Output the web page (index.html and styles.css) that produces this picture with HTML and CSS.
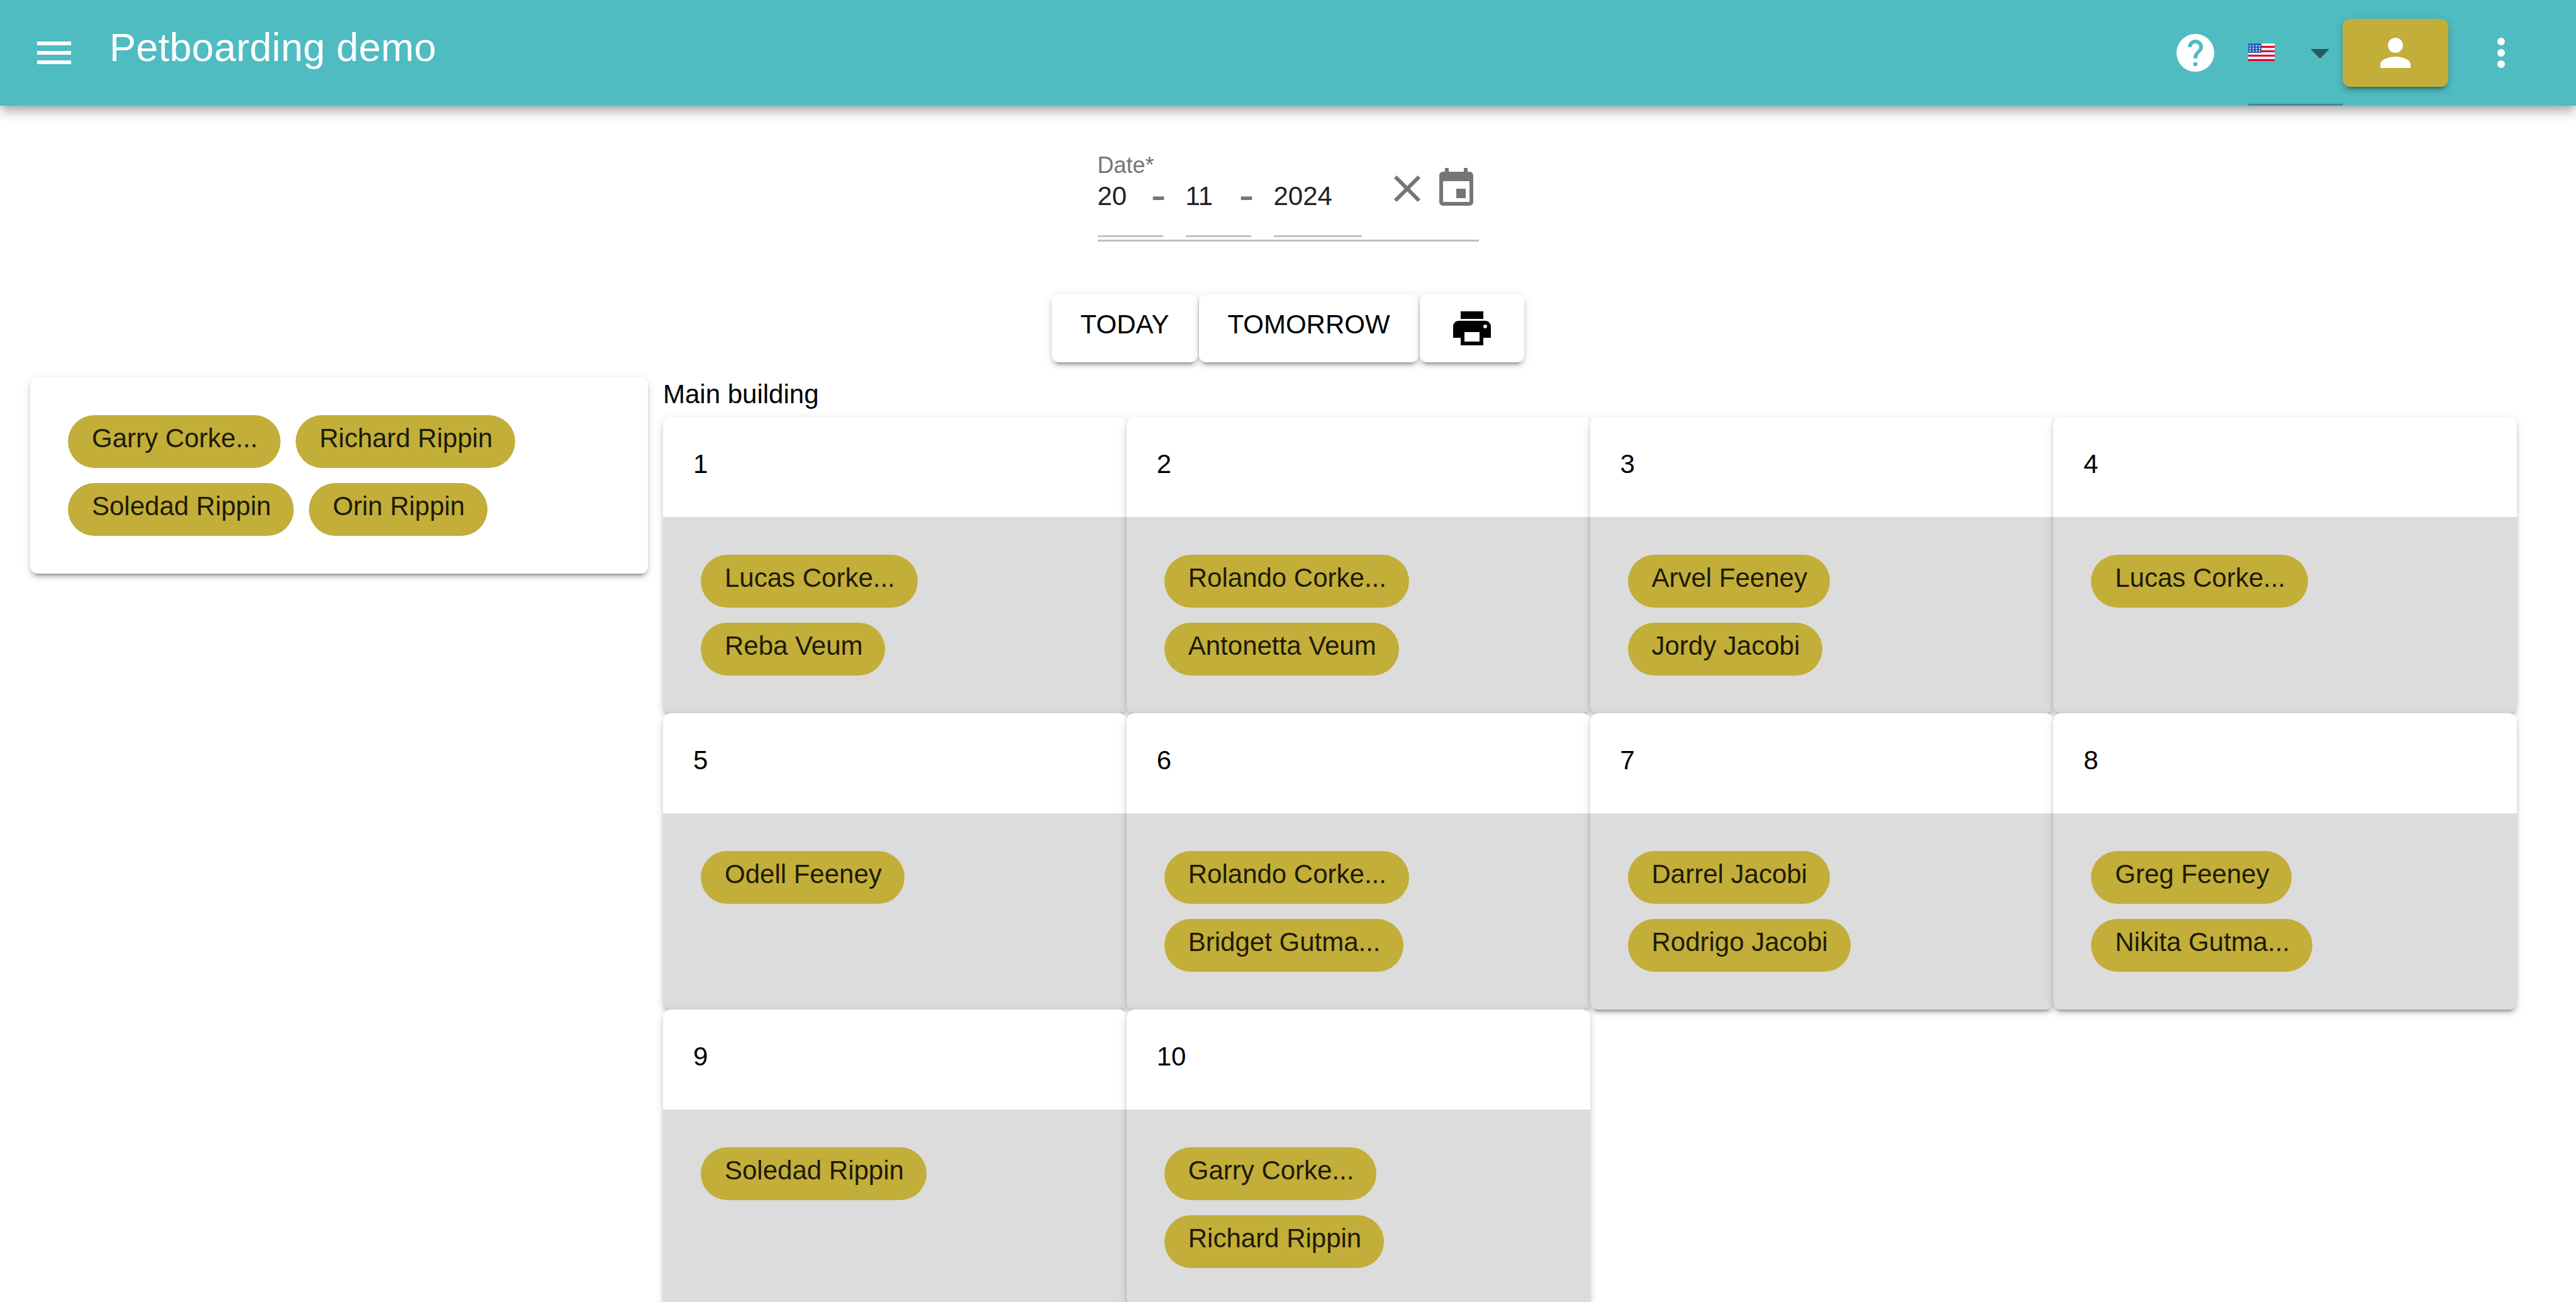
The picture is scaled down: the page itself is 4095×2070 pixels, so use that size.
FILE: index.html
```html
<!DOCTYPE html>
<html lang="en">
<head>
<meta charset="utf-8">
<title>Petboarding demo</title>
<link rel="stylesheet" href="styles.css">
</head>
<body>
<header class="appbar">
  <svg class="icon" viewBox="0 0 24 24"><path d="M3 18h18v-2H3v2zm0-5h18v-2H3v2zm0-7v2h18V6H3z"/></svg>
  <h1 class="title">Petboarding demo</h1>
  <div class="spacer"></div>
  <svg class="icon" viewBox="0 0 24 24"><path d="M12 2C6.48 2 2 6.48 2 12s4.48 10 10 10 10-4.48 10-10S17.52 2 12 2zm1 17h-2v-2h2v2zm2.07-7.75l-.9.92C13.45 12.9 13 13.5 13 15h-2v-.5c0-1.1.45-2.1 1.17-2.83l1.24-1.26c.37-.36.59-.86.59-1.41 0-1.1-.9-2-2-2s-2 .9-2 2H8c0-2.21 1.79-4 4-4s4 1.79 4 4c0 .88-.36 1.68-.93 2.25z"/></svg>
  <div class="lang">
    <svg class="flag" viewBox="0 0 42 28">
      <rect width="42" height="28" fill="#eef0f2"/>
      <g fill="#e4002b">
        <rect y="4" width="42" height="3"/><rect y="11" width="42" height="3"/><rect y="18" width="42" height="3"/><rect y="25" width="42" height="3"/>
      </g>
      <rect width="21" height="15" fill="#2f5fbd"/>
      <g fill="#dfe6f5">
        <rect x="2" y="3" width="2" height="2"/><rect x="7" y="3" width="2" height="2"/><rect x="12" y="3" width="2" height="2"/><rect x="17" y="3" width="2" height="2"/>
        <rect x="2" y="7" width="2" height="2"/><rect x="7" y="7" width="2" height="2"/><rect x="12" y="7" width="2" height="2"/><rect x="17" y="7" width="2" height="2"/>
        <rect x="2" y="11" width="2" height="2"/><rect x="7" y="11" width="2" height="2"/><rect x="12" y="11" width="2" height="2"/><rect x="17" y="11" width="2" height="2"/>
      </g>
    </svg>
    <svg class="caret" viewBox="0 0 30 15"><path d="M0 0h30L15 15z"/></svg>
  </div>
  <button class="user-btn" type="button">
    <svg class="icon" viewBox="0 0 24 24"><path d="M12 12c2.21 0 4-1.79 4-4s-1.79-4-4-4-4 1.79-4 4 1.79 4 4 4zm0 2c-2.67 0-8 1.34-8 4v2h16v-2c0-2.66-5.33-4-8-4z"/></svg>
  </button>
  <svg class="icon more" viewBox="0 0 24 24"><path d="M12 8c1.1 0 2-.9 2-2s-.9-2-2-2-2 .9-2 2 .9 2 2 2zm0 2c-1.1 0-2 .9-2 2s.9 2 2 2 2-.9 2-2-.9-2-2-2zm0 6c-1.1 0-2 .9-2 2s.9 2 2 2 2-.9 2-2-.9-2-2-2z"/></svg>
</header>

<section class="date-field">
  <div class="date-main">
    <div class="date-label">Date*</div>
    <div class="date-segs">
      <div class="seg seg-short">20</div><span class="sep">-</span>
      <div class="seg seg-short">11</div><span class="sep">-</span>
      <div class="seg seg-long">2024</div>
    </div>
  </div>
  <div class="date-icons">
    <svg class="icon grey" viewBox="0 0 24 24"><path d="M19 6.41L17.59 5 12 10.59 6.41 5 5 6.41 10.59 12 5 17.59 6.41 19 12 13.41 17.59 19 19 17.59 13.41 12z"/></svg>
    <svg class="icon grey" viewBox="0 0 24 24"><path d="M17 12h-5v5h5v-5zM16 1v2H8V1H6v2H5c-1.11 0-1.99.9-1.99 2L3 19c0 1.1.89 2 2 2h14c1.1 0 2-.9 2-2V5c0-1.1-.9-2-2-2h-1V1h-2zm3 18H5V8h14v11z"/></svg>
  </div>
</section>

<div class="actions">
  <button class="btn btn-today" type="button"><span>TODAY</span></button>
  <button class="btn btn-tomorrow" type="button"><span>TOMORROW</span></button>
  <button class="btn btn-icon" type="button">
    <svg class="icon dark" viewBox="0 0 24 24"><path d="M19 8H5c-1.66 0-3 1.34-3 3v6h4v4h12v-4h4v-6c0-1.66-1.34-3-3-3zm-3 11H8v-5h8v5zm3-7c-.55 0-1-.45-1-1s.45-1 1-1 1 .45 1 1-.45 1-1 1zm-1-9H6v4h12V3z"/></svg>
  </button>
</div>

<main class="board">
  <aside class="pool">
    <span class="chip">Garry Corke...</span>
    <span class="chip">Richard Rippin</span>
    <span class="chip">Soledad Rippin</span>
    <span class="chip">Orin Rippin</span>
  </aside>
  <section class="building">
    <div class="building-name">Main building</div>
    <div class="tiles">
      <article class="tile"><div class="tile-head">1</div><div class="tile-body"><span class="chip">Lucas Corke...</span><span class="chip">Reba Veum</span></div></article>
      <article class="tile"><div class="tile-head">2</div><div class="tile-body"><span class="chip">Rolando Corke...</span><span class="chip">Antonetta Veum</span></div></article>
      <article class="tile"><div class="tile-head">3</div><div class="tile-body"><span class="chip">Arvel Feeney</span><span class="chip">Jordy Jacobi</span></div></article>
      <article class="tile"><div class="tile-head">4</div><div class="tile-body"><span class="chip">Lucas Corke...</span></div></article>
      <article class="tile"><div class="tile-head">5</div><div class="tile-body"><span class="chip">Odell Feeney</span></div></article>
      <article class="tile"><div class="tile-head">6</div><div class="tile-body"><span class="chip">Rolando Corke...</span><span class="chip">Bridget Gutma...</span></div></article>
      <article class="tile"><div class="tile-head">7</div><div class="tile-body"><span class="chip">Darrel Jacobi</span><span class="chip">Rodrigo Jacobi</span></div></article>
      <article class="tile"><div class="tile-head">8</div><div class="tile-body"><span class="chip">Greg Feeney</span><span class="chip">Nikita Gutma...</span></div></article>
      <article class="tile"><div class="tile-head">9</div><div class="tile-body"><span class="chip">Soledad Rippin</span></div></article>
      <article class="tile"><div class="tile-head">10</div><div class="tile-body"><span class="chip">Garry Corke...</span><span class="chip">Richard Rippin</span></div></article>
    </div>
  </section>
</main>
</body>
</html>
```
FILE: styles.css
```css
* { box-sizing: border-box; }
html, body { margin: 0; padding: 0; height: 100%; overflow: hidden; background: #fff; }
body { font-family: "Liberation Sans", Arial, sans-serif; font-size: 42px; color: #000; }

.icon { width: 72px; height: 72px; flex: none; fill: #fff; display: block; }
.icon.grey { fill: #757575; }
.icon.dark { fill: #000; }

.appbar {
  position: relative;
  z-index: 2;
  display: flex;
  align-items: center;
  height: 168px;
  padding: 0 83px 0 50px;
  background: #4ebcc1;
  box-shadow: 0 6px 12px -3px rgba(0,0,0,.2), 0 12px 15px 0 rgba(0,0,0,.14), 0 3px 30px 0 rgba(0,0,0,.12);
}
.title {
  margin: 0 0 18px 52px;
  font-size: 63px;
  font-weight: 400;
  line-height: 72px;
  letter-spacing: .3px;
  color: #fff;
}
.spacer { flex: 1; }
.lang {
  display: flex;
  align-items: center;
  align-self: stretch;
  width: 150px;
  margin-left: 48px;
  border-bottom: 3px solid #3a8d91;
}
.flag { width: 42px; height: 28px; flex: none; }
.caret { width: 30px; height: 15px; margin: 6px 0 0 57px; fill: #26595c; flex: none; }
.user-btn {
  display: flex;
  align-items: center;
  justify-content: center;
  width: 168px;
  height: 108px;
  padding: 0;
  border: 0;
  border-radius: 12px;
  background: #c2ae38;
  box-shadow: 0 9px 3px -6px rgba(0,0,0,.2), 0 6px 6px 0 rgba(0,0,0,.14), 0 3px 15px 0 rgba(0,0,0,.12);
}
.more { margin-left: 48px; }

.date-field {
  display: flex;
  width: 606px;
  margin: 72px auto 0;
  padding-bottom: 4px;
  border-bottom: 3px solid #bdbdbd;
}
.date-main { width: 456px; }
.date-label { font-size: 36px; line-height: 45px; color: #757575; }
.date-segs { display: flex; }
.seg {
  height: 92px;
  padding-top: 4px;
  font-size: 42px;
  line-height: 46px;
  color: #222;
  border-bottom: 3px solid #c4c4c4;
}
.seg-short { width: 104px; }
.seg-long { width: 140px; }
.sep {
  width: 55px;
  margin-left: -19px;
  font-size: 72px;
  line-height: 48px;
  color: #757575;
}
.date-icons { display: flex; gap: 6px; padding-top: 24px; }

.actions { display: flex; justify-content: center; gap: 2px; margin-top: 84px; }
.btn {
  display: block;
  height: 108px;
  padding: 0 0 12px;
  border: 0;
  border-radius: 12px;
  background: #fff;
  color: #000;
  font: inherit;
  box-shadow: 0 9px 3px -6px rgba(0,0,0,.2), 0 6px 6px 0 rgba(0,0,0,.14), 0 3px 15px 0 rgba(0,0,0,.12);
}
.btn-today { width: 232px; }
.btn-tomorrow { width: 349px; }
.btn-icon { width: 166px; padding: 0 47px; }

.board { display: flex; gap: 24px; margin-top: 24px; padding-left: 48px; }
.pool {
  display: flex;
  flex-wrap: wrap;
  align-content: flex-start;
  width: 982px;
  height: 312px;
  padding: 48px;
  border-radius: 12px;
  background: #fff;
  box-shadow: 0 9px 3px -6px rgba(0,0,0,.2), 0 6px 6px 0 rgba(0,0,0,.14), 0 3px 15px 0 rgba(0,0,0,.12);
}
.chip {
  display: block;
  height: 84px;
  margin: 12px;
  padding: 11px 36px 0 38px;
  border-radius: 42px;
  background: #c2ae38;
  color: rgba(0,0,0,.87);
  line-height: 52px;
  white-space: nowrap;
}
.building { width: 2947px; }
.building-name { height: 63px; line-height: 53px; }
.tiles { display: grid; grid-template-columns: repeat(4, 1fr); }
.tile {
  position: relative;
  display: flex;
  flex-direction: column;
  border-radius: 12px;
  background: #dcdcdc;
  box-shadow: 0 9px 3px -6px rgba(0,0,0,.2), 0 6px 6px 0 rgba(0,0,0,.14), 0 3px 15px 0 rgba(0,0,0,.12);
}
.tile-head {
  height: 159px;
  padding: 49px 48px 0;
  border-radius: 12px 12px 0 0;
  background: #fff;
  line-height: 52px;
}
.tile-body {
  display: flex;
  flex-direction: column;
  align-items: flex-start;
  flex: 1;
  min-height: 312px;
  padding: 48px;
}
```
